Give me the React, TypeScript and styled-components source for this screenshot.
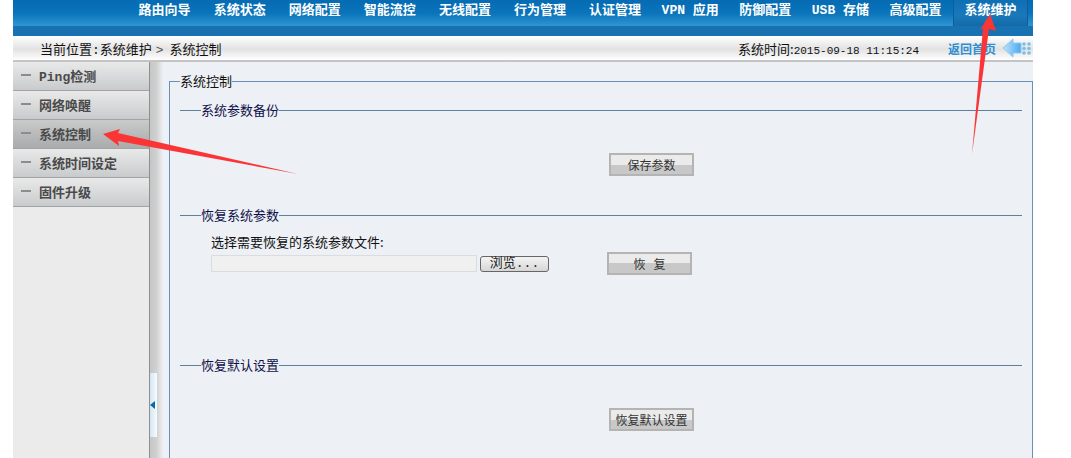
import styled, { createGlobalStyle } from "styled-components"

const CN = `"Noto Sans CJK SC", "Liberation Sans", sans-serif`
const MONO = `"Liberation Mono", "Noto Sans CJK SC", monospace`

const navItems = [
    "路由向导",
    "系统状态",
    "网络配置",
    "智能流控",
    "无线配置",
    "行为管理",
    "认证管理",
    "VPN 应用",
    "防御配置",
    "USB 存储",
    "高级配置",
    "系统维护",
]

const sideItems = ["Ping检测", "网络唤醒", "系统控制", "系统时间设定", "固件升级"]

const GlobalStyle = createGlobalStyle`
    html, body {
        margin: 0;
        padding: 0;
        background: #fff;
        overflow: hidden;
    }
    * {
        box-sizing: border-box;
    }
`

function App() {
    return (
        <>
            <GlobalStyle />
            <Page>
                <Header>
                    <Nav>
                        {navItems.map((item) => (
                            <NavItem key={item} $active={item === "系统维护"}>
                                {item}
                            </NavItem>
                        ))}
                    </Nav>
                    <Band />
                </Header>
                <Breadcrumb>
                    <Path>
                        当前位置:系统维护<Chevron>&gt;</Chevron>系统控制
                    </Path>
                    <Clock>
                        系统时间:<Digits>2015-09-18 11:15:24</Digits>
                    </Clock>
                    <HomeLink>返回首页</HomeLink>
                    <BackIcon viewBox="0 0 30 20">
                        <defs>
                            <linearGradient id="backArrow" x1="0" x2="1" y1="0" y2="0">
                                <stop offset="0" stopColor="#bfe3fb" />
                                <stop offset="1" stopColor="#4aa8ee" />
                            </linearGradient>
                        </defs>
                        <path d="M0 10 L10 1 V5 H18 V15 H10 V19 Z" fill="url(#backArrow)" stroke="#8ccaf5" />
                        <g fill="#7fbde8">
                            <circle cx="21" cy="6" r="1.8" />
                            <circle cx="26" cy="6" r="1.8" />
                            <circle cx="21" cy="10.5" r="1.8" />
                            <circle cx="26" cy="10.5" r="1.8" />
                            <circle cx="21" cy="15" r="1.8" />
                            <circle cx="26" cy="15" r="1.8" />
                        </g>
                    </BackIcon>
                </Breadcrumb>
                <Body>
                    <Sidebar>
                        {sideItems.map((item) => (
                            <SideItem key={item} $active={item === "系统控制"}>
                                <Dash />
                                {item}
                            </SideItem>
                        ))}
                    </Sidebar>
                    <Splitter>
                        <Toggle>
                            <ToggleArrow />
                        </Toggle>
                    </Splitter>
                    <Main>
                        <Outer>
                            <OuterLegend>系统控制</OuterLegend>
                            <Section $height={105}>
                                <SectionLegend>系统参数备份</SectionLegend>
                                <Centered>
                                    <ActionButton>保存参数</ActionButton>
                                </Centered>
                            </Section>
                            <Section $height={150}>
                                <SectionLegend>恢复系统参数</SectionLegend>
                                <FileLabel>选择需要恢复的系统参数文件:</FileLabel>
                                <FileRow>
                                    <FileField />
                                    <BrowseButton>浏览...</BrowseButton>
                                    <RestoreButton>恢   复</RestoreButton>
                                </FileRow>
                            </Section>
                            <Section $height={100}>
                                <SectionLegend>恢复默认设置</SectionLegend>
                                <Centered>
                                    <ActionButton>恢复默认设置</ActionButton>
                                </Centered>
                            </Section>
                        </Outer>
                    </Main>
                </Body>

                {/* 스크린샷 위에 그려진 빨간 화살표 */}
                <Annotation viewBox="0 0 1071 458">
                    <polygon points="103,134 120,129 118,133 298,174 118,141 119,146" fill="#fb3535" />
                    <polygon points="990,14 996,31 989,29 972,154 983,28 980,30" fill="#fb3535" />
                </Annotation>
            </Page>
        </>
    )
}

export default App

const Page = styled.div`
    position: relative;
    width: 1071px;
    height: 458px;
    padding-left: 13px;
    padding-right: 38px;
    overflow: hidden;
    font-family: ${CN};
`

const Header = styled.div`
    height: 36px;
    background: #1871b1;
`

const Nav = styled.div`
    height: 26px;
    padding-left: 114px;
    display: flex;
    background: linear-gradient(#056bb2, #0a74ba 50%, #2f95d3);
`

const NavItem = styled.div<{ $active?: boolean }>`
    width: 75.1px;
    height: 26px;
    padding-bottom: 9px;
    display: flex;
    justify-content: center;
    align-items: center;
    white-space: nowrap;
    font-family: ${MONO};
    font-size: 13px;
    font-weight: 700;
    color: #fff;
    background: ${({ $active }) =>
        $active ? "linear-gradient(#0f6fb5, #1a78ba 60%, #146aa8)" : "none"};
    box-shadow: ${({ $active }) =>
        $active ? "inset 1px 0 #0f5c96, inset -1px 0 #0f5c96" : "none"};
`

const Band = styled.div`
    height: 10px;
`

const Breadcrumb = styled.div`
    height: 26px;
    padding-left: 27px;
    display: flex;
    align-items: center;
    border-bottom: 2px solid #c4c4c4;
    background: linear-gradient(#fff, #e2e2e2 55%, #fff);
    font-size: 13px;
    color: #111;
`

const Path = styled.div`
    width: 698px;
    font-family: ${MONO};
    white-space: pre;
`

const Chevron = styled.span`
    margin: 0 6px 0 4px;
    color: #555;
    font-family: "Liberation Sans", sans-serif;
`

const Clock = styled.div`
    width: 210px;
    white-space: nowrap;
`

const Digits = styled.span`
    font-family: ${MONO};
    font-size: 11px;
`

const HomeLink = styled.div`
    width: 55px;
    font-size: 12px;
    font-weight: 700;
    color: #2f8fd0;
    white-space: nowrap;
`

const BackIcon = styled.svg`
    width: 30px;
    height: 20px;
    flex: none;
`

const Body = styled.div`
    height: 396px;
    display: flex;
`

const Sidebar = styled.div`
    width: 137px;
    background: #ebebeb;
    border-right: 1px solid #8f8f8f;
`

const SideItem = styled.div<{ $active?: boolean }>`
    height: 29px;
    padding: 0 0 2px 8px;
    display: flex;
    align-items: center;
    gap: 8px;
    font-family: ${MONO};
    font-size: 13px;
    font-weight: 700;
    color: #4a4a4a;
    border-bottom: 1px solid #a3a3a3;
    background: ${({ $active }) =>
        $active
            ? "linear-gradient(#c9caca, #a9abac)"
            : "linear-gradient(#e9e9e9, #c8cbcd)"};
`

const Dash = styled.span`
    width: 10px;
    height: 2px;
    background: #8c8c8c;
`

const Splitter = styled.div`
    position: relative;
    width: 13px;
    background: linear-gradient(90deg, #c6c6c6, #d0d0d0 50%, #edf0f4);
`

const Toggle = styled.div`
    position: absolute;
    left: 0;
    top: 311px;
    width: 7px;
    height: 64px;
    display: flex;
    align-items: center;
    background: linear-gradient(90deg, #d3e6f3, #f7fbfe);
`

const ToggleArrow = styled.div`
    width: 0;
    height: 0;
    border-top: 4px solid transparent;
    border-bottom: 4px solid transparent;
    border-right: 5px solid #0b6aa6;
`

const Main = styled.div`
    flex: 1;
    padding: 11px 0 0 6px;
    background: #edf0f4;
`

const Outer = styled.fieldset`
    margin: 0;
    height: 420px;
    padding: 13px 10px 0 10px;
    border: 1px solid #6a8fb8;
    border-bottom: none;
`

const OuterLegend = styled.legend`
    padding: 0;
    margin-left: 0;
    font-size: 13px;
    line-height: 16px;
    color: #111;
`

const Section = styled.fieldset<{ $height: number }>`
    margin: 0;
    height: ${({ $height }) => `${$height}px`};
    padding: 0;
    border: none;
    border-top: 1px solid #5f7f9f;
`

const SectionLegend = styled.legend`
    margin-left: 21px;
    padding: 0;
    font-size: 13px;
    line-height: 16px;
    color: #10104a;
`

const Centered = styled.div`
    padding-top: 33px;
    padding-left: 429px;
`

const ActionButton = styled.button`
    width: 85px;
    height: 23px;
    padding: 0;
    font-family: ${CN};
    font-size: 12px;
    color: #333;
    white-space: pre;
    border: 2px solid #b4b4b4;
    background: linear-gradient(#ebebeb 50%, #c8c8c8 50%);
`

const FileLabel = styled.div`
    margin: 11px 0 0 31px;
    font-size: 13px;
    line-height: 16px;
    color: #111;
`

const FileRow = styled.div`
    margin: 2px 0 0 31px;
    display: flex;
    align-items: center;
`

const FileField = styled.div`
    width: 266px;
    height: 17px;
    border: 1px solid #dcdcdc;
    background: #f0f0f0;
`

const BrowseButton = styled.button`
    width: 69px;
    height: 16px;
    margin-left: 3px;
    padding: 0;
    font-family: ${MONO};
    font-size: 13px;
    line-height: 12px;
    color: #222;
    border: 1px solid #666;
    border-radius: 3px;
    background: linear-gradient(#f4f4f4, #d6d6d6);
`

const RestoreButton = styled(ActionButton)`
    margin-left: 58px;
`

const Annotation = styled.svg`
    position: absolute;
    left: 0;
    top: 0;
    width: 1071px;
    height: 458px;
    pointer-events: none;
`
